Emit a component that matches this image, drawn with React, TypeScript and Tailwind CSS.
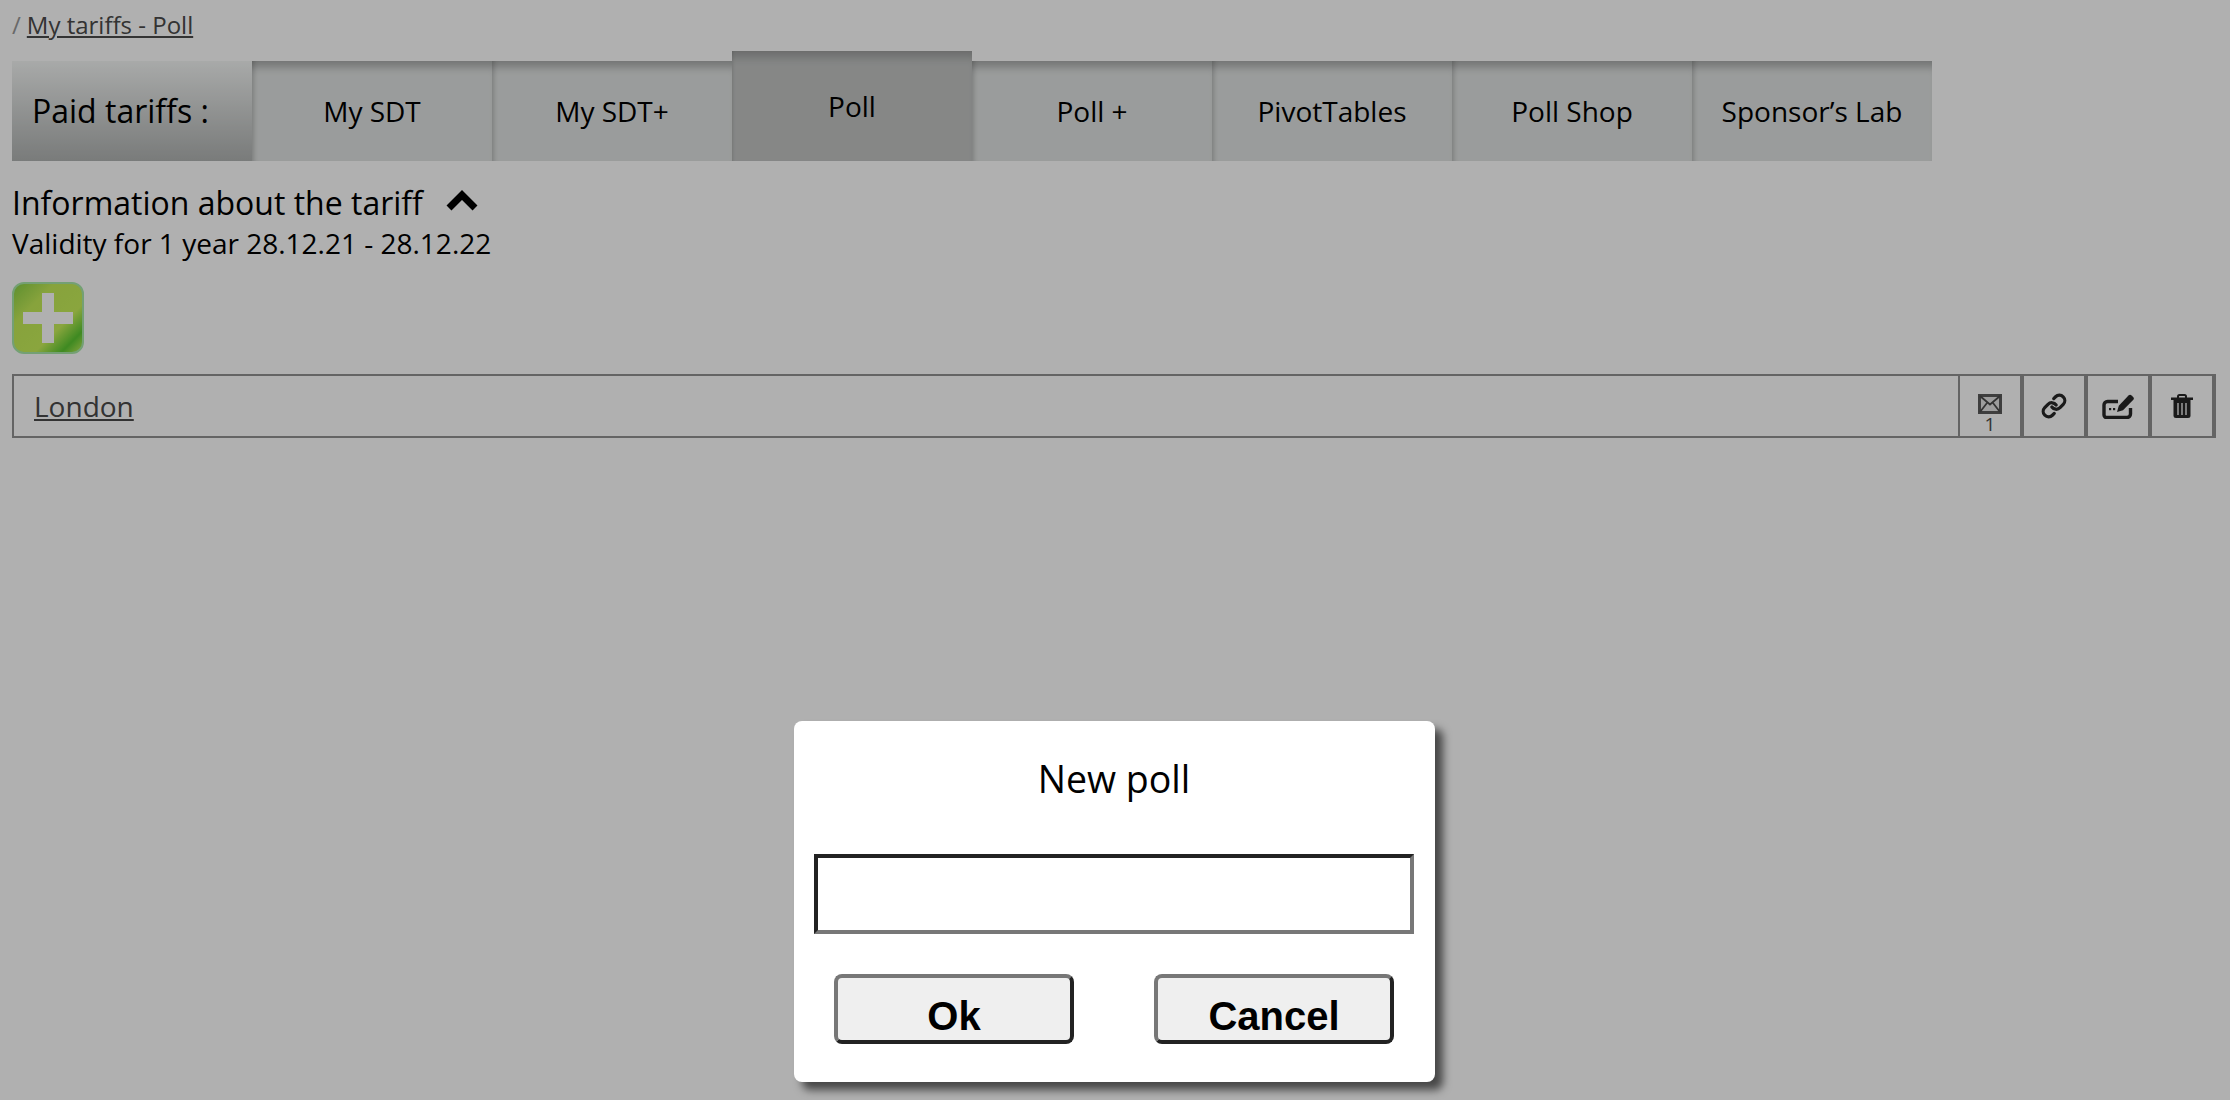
import { Fragment } from "react";

const tabs = ["My SDT", "My SDT+", "Poll", "Poll +", "PivotTables", "Poll Shop", "Sponsor’s Lab"];

function MailIcon() {
  return (
    <svg width="24" height="20" viewBox="0 0 24 20" className="block">
      <rect x="0" y="0" width="24" height="20" fill="#e4e4e4" />
      <rect x="1.500" y="1.500" width="21" height="17" fill="none" stroke="#5a5a5a" strokeWidth="3" />
      <path d="M2 2l10 8.500L22 2M2 18l7-9M22 18l-7-9" fill="none" stroke="#4a4a4a" strokeWidth="1.800" />
    </svg>
  );
}

function LinkIcon() {
  return (
    <svg width="26" height="26" viewBox="0 0 24 24" fill="none" stroke="#262626" strokeWidth="3" strokeLinecap="round" className="block">
      <path d="M10 13a5 5 0 0 0 7.540.54l3-3a5 5 0 0 0-7.070-7.070l-1.720 1.710" />
      <path d="M14 11a5 5 0 0 0-7.540-.54l-3 3a5 5 0 0 0 7.070 7.070l1.710-1.710" />
    </svg>
  );
}

function EditIcon() {
  return (
    <svg width="32" height="25" viewBox="0 0 32 25" className="block">
      <path d="M16 7.500H5.500a3.500 3.500 0 0 0-3.500 3.500v10a2.500 2.500 0 0 0 2.500 2.500h20.500a3.500 3.500 0 0 0 3.500-3.500V14" fill="none" stroke="#262626" strokeWidth="3.400" />
      <path d="M15 18l1.800-6.200L26.500 1.500a2.200 2.200 0 0 1 3.100 0l1.500 1.500a2.200 2.200 0 0 1 0 3.100L21 16.200z" fill="#262626" />
      <rect x="7" y="14" width="2.200" height="2.200" fill="#262626" />
      <rect x="11" y="14" width="2.200" height="2.200" fill="#262626" />
    </svg>
  );
}

function TrashIcon() {
  return (
    <svg width="22" height="24" viewBox="0 0 22 24" className="block">
      <path d="M7 4V2.500A1.500 1.500 0 0 1 8.500 1h5A1.500 1.500 0 0 1 15 2.500V4" fill="none" stroke="#262626" strokeWidth="2" />
      <rect x="0" y="3.500" width="22" height="2.500" fill="#262626" />
      <path d="M2.500 6h17v15.500a2.500 2.500 0 0 1-2.500 2.500H5a2.500 2.500 0 0 1-2.500-2.500z" fill="#262626" />
      <path d="M7 9v12M11 9v12M15 9v12" stroke="#c4c4c4" strokeWidth="1.800" />
    </svg>
  );
}

function PlusIcon() {
  return (
    <svg width="72" height="72" viewBox="0 0 72 72" className="block">
      <defs>
        <linearGradient id="plusFill" x1="0" y1="0" x2="1" y2="1">
          <stop offset="0" stopColor="#86cf44" />
          <stop offset="0.3" stopColor="#c4ec58" />
          <stop offset="0.65" stopColor="#c8f05a" />
          <stop offset="0.84" stopColor="#5bc831" />
          <stop offset="1" stopColor="#c8f05c" />
        </linearGradient>
      </defs>
      <rect x="1" y="1" width="70" height="70" rx="11" fill="url(#plusFill)" stroke="#a8e8a8" strokeWidth="2" />
      <path d="M30 11h12v19h19v12H42v19H30V42H11V30h19z" fill="#fff" />
    </svg>
  );
}

export default function App() {
  return (
    <div className="relative h-[1100px] overflow-hidden bg-white font-['Open_Sans',sans-serif] text-black">
      <div className="px-3">
        <div className="flex h-[50px] items-center text-[24px] leading-none">
          <span className="mr-[6px] text-[#999]">/</span>
          <a className="text-[#4a4a4a] underline">My tariffs - Poll</a>
        </div>

        <div className="flex h-[111px] items-end">
          <div className="flex h-[100px] w-[240px] items-center bg-gradient-to-b from-[#f4f6f5] to-[#b0b3b2] pl-5 text-[32px]">
            Paid tariffs :
          </div>
          {tabs.map((tab) =>
            tab === "Poll" ? (
              <div key={tab} className="flex h-[110px] w-[240px] items-center justify-center bg-[#c2c4c3] text-[28px] shadow-[inset_3px_0_3px_-2px_rgba(0,0,0,0.1),inset_0_12px_10px_-6px_rgba(0,0,0,0.2)]">
                {tab}
              </div>
            ) : (
              <div key={tab} className="flex h-[100px] w-[240px] items-center justify-center bg-[#e0e3e2] text-[28px] shadow-[inset_6px_0_5px_-4px_rgba(0,0,0,0.18),inset_0_12px_8px_-6px_rgba(0,0,0,0.25)]">
                {tab}
              </div>
            )
          )}
        </div>

        <div className="mt-[22px] flex h-[40px] items-center text-[32px] leading-none">
          Information about the tariff
          <svg width="34" height="22" viewBox="0 0 34 22" className="ml-[22px] -mt-1 block">
            <path d="M4 18L17 5l13 13" fill="none" stroke="#000" strokeWidth="7" />
          </svg>
        </div>
        <div className="flex h-[40px] items-center text-[28px] leading-none">Validity for 1 year 28.12.21 - 28.12.22</div>

        <div className="mt-[19px]">
          <PlusIcon />
        </div>

        <div className="mt-[20px] flex h-[64px] w-[2204px] text-[#4a4a4a]">
          <div className="flex flex-1 items-center border-2 border-[#929292] pl-5 text-[28px]">
            <a className="underline">London</a>
          </div>
          <div className="flex w-[64px] flex-col items-center border-y-2 border-r-4 border-[#929292] pt-[18px] text-[19px] leading-none">
            <MailIcon />
            <span className="mt-[1px] leading-[18px]">1</span>
          </div>
          {[LinkIcon, EditIcon, TrashIcon].map((Icon, i) => (
            <Fragment key={i}>
              <div className="flex w-[64px] items-center justify-center border-y-2 border-r-4 border-[#929292]">
                <Icon />
              </div>
            </Fragment>
          ))}
        </div>
      </div>

      <div className="absolute inset-0 bg-black/[0.31]">
        <div className="absolute left-[794px] top-[721px] h-[361px] w-[641px] rounded-lg bg-white px-5 shadow-[8px_8px_8px_rgba(0,0,0,0.6)]">
          <div className="w-[600px] pt-[33px] text-center text-[37.5px] leading-[50px]">New poll</div>
          <input className="mt-[50px] block h-[80px] w-[600px] border-4 border-b-[#777] border-l-[#222] border-r-[#777] border-t-[#222] bg-white" />
          <div className="mt-[40px] flex w-[600px] justify-between px-5">
            <button className="h-[70px] w-[240px] rounded-lg border-4 border-b-[#222] border-l-[#777] border-r-[#222] border-t-[#777] bg-[#efefef] pt-[14px] font-['Liberation_Sans',sans-serif] text-[40px] font-bold leading-none">
              Ok
            </button>
            <button className="h-[70px] w-[240px] rounded-lg border-4 border-b-[#222] border-l-[#777] border-r-[#222] border-t-[#777] bg-[#efefef] pt-[14px] font-['Liberation_Sans',sans-serif] text-[40px] font-bold leading-none">
              Cancel
            </button>
          </div>
        </div>
      </div>
    </div>
  );
}
